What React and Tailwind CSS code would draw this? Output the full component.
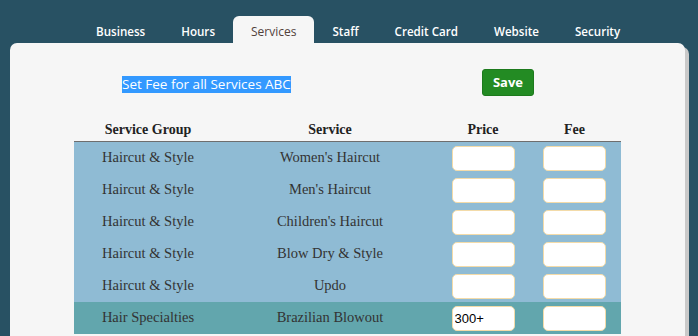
const TABS = ["Business", "Hours", "Services", "Staff", "Credit Card", "Website", "Security"];

const ROWS = [
  { group: "Haircut & Style", service: "Women's Haircut", price: "" },
  { group: "Haircut & Style", service: "Men's Haircut", price: "" },
  { group: "Haircut & Style", service: "Children's Haircut", price: "" },
  { group: "Haircut & Style", service: "Blow Dry & Style", price: "" },
  { group: "Haircut & Style", service: "Updo", price: "" },
  { group: "Hair Specialties", service: "Brazilian Blowout", price: "300+", alt: true },
];

const COLS = "grid grid-cols-[148px_216px_90px_93px]";

function FeeInput({ value }) {
  return (
    <input
      defaultValue={value}
      className="w-[63px] h-[25px] rounded-[5px] border border-[#f3dba9] bg-white px-[2px] text-[13px] text-black outline-none font-['Liberation_Sans',Arial,sans-serif]"
    />
  );
}

export default function App() {
  return (
    <div className="h-[336px] w-full overflow-hidden bg-[#285163]">
      {/* tab strip */}
      <div className="flex pl-[78px] pt-[16px] font-['Open_Sans',sans-serif] text-[11.6px] font-semibold">
        {TABS.map((t) =>
          t === "Services" ? (
            <div key={t} className="h-[27px] px-[18px] pt-[7px] rounded-t-[6px] bg-[#f6f6f6] text-[#52413b] font-normal text-[12px]">
              {t}
            </div>
          ) : (
            <div key={t} className="h-[27px] px-[18px] pt-[7px] text-white">
              {t}
            </div>
          )
        )}
      </div>

      {/* panel */}
      <div className="ml-[10px] mr-[13px] h-[400px] rounded-t-[7px] bg-[#f6f6f6] shadow-[4px_4px_0_#c9c9c9]">
        <div className="flex items-center pt-[26px] pl-[112px] h-[53px]">
          <div className="w-[360px]">
            <span className="bg-[#3399ff] text-white text-[13.5px] leading-[17px] inline-block font-['Open_Sans',sans-serif]">
              Set Fee for all Services ABC
            </span>
          </div>
          <button className="w-[52px] h-[27px] rounded-[3px] border border-[#1d7a1d] bg-[#238b23] text-white text-[13px] font-bold font-['Open_Sans',sans-serif]">
            Save
          </button>
        </div>

        <div className="ml-[64px] w-[547px] mt-[21px] font-['Liberation_Serif',serif]">
          <div className={`${COLS} h-[25px] items-center border-b border-[#6e6e6e] text-[14px] font-bold text-[#222] text-center`}>
            <div>Service Group</div>
            <div>Service</div>
            <div>Price</div>
            <div>Fee</div>
          </div>
          {ROWS.map((r, i) => (
            <div
              key={i}
              className={`${COLS} h-[32px] items-center text-center text-[14.5px] text-[#333] ${r.alt ? "bg-[#62a6ad]" : "bg-[#8fbbd4]"}`}
            >
              <div>{r.group}</div>
              <div>{r.service}</div>
              <div className="flex justify-center"><FeeInput value={r.price} /></div>
              <div className="flex justify-center"><FeeInput value="" /></div>
            </div>
          ))}
        </div>
      </div>
    </div>
  );
}
